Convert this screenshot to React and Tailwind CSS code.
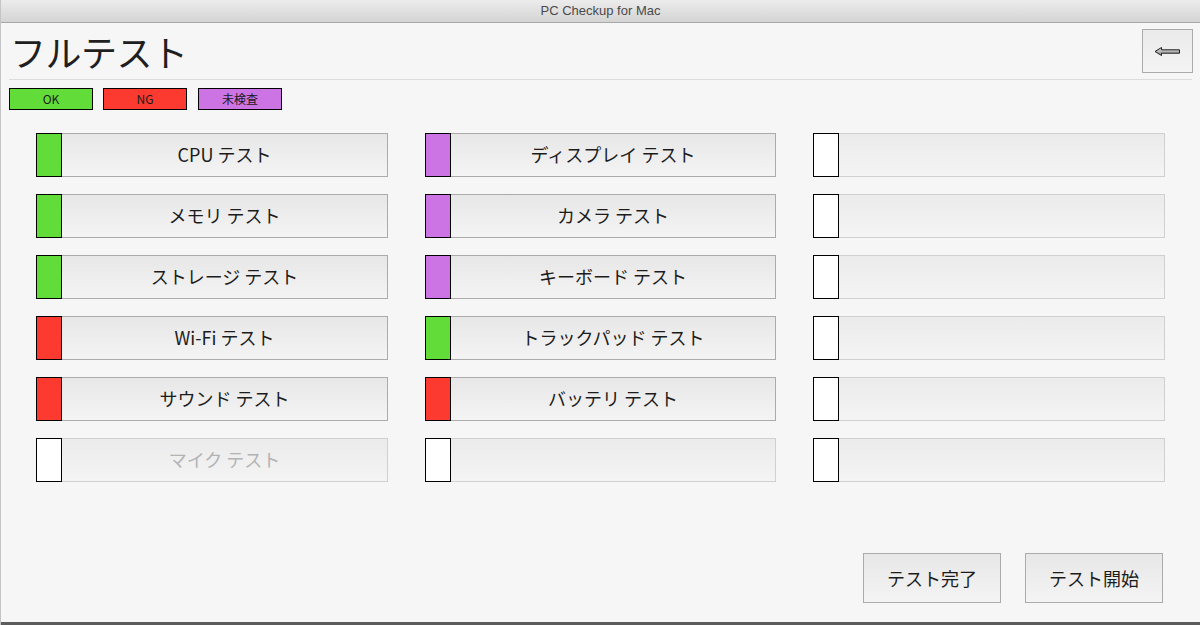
import React from 'react';

const COLORS = {
  ok: 'bg-[#62dc38]',
  ng: 'bg-[#fc3a2f]',
  pending: 'bg-[#cd74e4]',
  none: 'bg-white',
};

const rows = [
  [
    { label: 'CPU テスト', status: 'ok' },
    { label: 'ディスプレイ テスト', status: 'pending' },
    { label: '', status: 'none' },
  ],
  [
    { label: 'メモリ テスト', status: 'ok' },
    { label: 'カメラ テスト', status: 'pending' },
    { label: '', status: 'none' },
  ],
  [
    { label: 'ストレージ テスト', status: 'ok' },
    { label: 'キーボード テスト', status: 'pending' },
    { label: '', status: 'none' },
  ],
  [
    { label: 'Wi-Fi テスト', status: 'ng' },
    { label: 'トラックパッド テスト', status: 'ok' },
    { label: '', status: 'none' },
  ],
  [
    { label: 'サウンド テスト', status: 'ng' },
    { label: 'バッテリ テスト', status: 'ng' },
    { label: '', status: 'none' },
  ],
  [
    { label: 'マイク テスト', status: 'none' },
    { label: '', status: 'none' },
    { label: '', status: 'none' },
  ],
];

function TestItem({ label, status }) {
  const disabled = status === 'none';
  return (
    <div className="flex h-[44px]">
      <div className={`w-[26px] shrink-0 border border-black ${COLORS[status]}`} />
      <button
        className={`flex-1 border border-l-0 flex items-center justify-center pb-px text-[18px] ${
          disabled
            ? 'border-[#d0d0d0] bg-gradient-to-b from-[#ebebeb] to-[#f4f4f4] text-[#b3b3b3]'
            : 'border-[#ababab] bg-gradient-to-b from-[#e7e7e7] to-[#f4f4f4] text-[#1c1c1c]'
        }`}
      >
        {label}
      </button>
    </div>
  );
}

function App() {
  return (
    <div
      className="w-[1200px] h-[625px] bg-[#f6f6f6] flex flex-col overflow-hidden border-l border-[#c4c4c4]"
      style={{ fontFamily: '"Noto Sans CJK JP", "Noto Sans", sans-serif' }}
    >
      <div
        className="h-[23px] shrink-0 bg-gradient-to-b from-[#ececec] to-[#d4d4d4] border-b border-[#a8a8a8] text-center text-[13px] leading-[22px] text-[#4a4a4a]"
        style={{ fontFamily: '"Liberation Sans", Arial, sans-serif' }}
      >
        PC Checkup for Mac
      </div>

      <div className="flex flex-col flex-1">
        <div className="flex items-start justify-between h-[56px] pl-[9px] pr-[7px]">
          <h1 className="text-[36px] leading-[36px] mt-[10px] text-[#1f1f1f] tracking-[-0.5px]">フルテスト</h1>
          <button className="mt-[6px] w-[51px] h-[44px] border border-[#ababab] bg-gradient-to-b from-[#eaeaea] to-[#f4f4f4] flex items-center justify-center">
            <svg width="27" height="11" viewBox="0 0 27 11">
              <defs>
                <linearGradient id="shaft" x1="0" y1="0" x2="0" y2="1">
                  <stop offset="0" stopColor="#e0e0e0" />
                  <stop offset="1" stopColor="#8a8a8a" />
                </linearGradient>
              </defs>
              <path
                d="M1 5.5 L7.5 1.5 L7.5 3.8 L25.5 3.8 L25.5 7.2 L7.5 7.2 L7.5 9.5 Z"
                fill="url(#shaft)"
                stroke="#1e1e1e"
                strokeWidth="1"
                strokeLinejoin="round"
              />
            </svg>
          </button>
        </div>
        <div className="mx-[8px] h-px bg-[#dcdcdc]" />

        <div className="flex gap-[10px] ml-[8px] mt-[8px] text-[12px] text-[#1a1a1a]">
          <div className="w-[84px] h-[22px] border border-black bg-[#62dc38] flex items-center justify-center">OK</div>
          <div className="w-[84px] h-[22px] border border-black bg-[#fc3a2f] flex items-center justify-center">NG</div>
          <div className="w-[84px] h-[22px] border border-black bg-[#cd74e4] flex items-center justify-center ml-px">未検査</div>
        </div>

        <div className="grid grid-cols-[352px_351px_352px] gap-x-[37px] gap-y-[17px] ml-[35px] mt-[23px]">
          {rows.flat().map((item, i) => (
            <TestItem key={i} label={item.label} status={item.status} />
          ))}
        </div>

        <div className="mt-auto flex justify-end gap-[24px] pr-[37px] pb-[19px]">
          <button className="w-[138px] h-[50px] border border-[#ababab] bg-gradient-to-b from-[#e7e7e7] to-[#f4f4f4] text-[18px] text-[#1c1c1c]">
            テスト完了
          </button>
          <button className="w-[138px] h-[50px] border border-[#ababab] bg-gradient-to-b from-[#e7e7e7] to-[#f4f4f4] text-[18px] text-[#1c1c1c]">
            テスト開始
          </button>
        </div>
      </div>
      <div className="h-[3px] shrink-0 bg-[#5c5c5c]" />
    </div>
  );
}

export default App;
